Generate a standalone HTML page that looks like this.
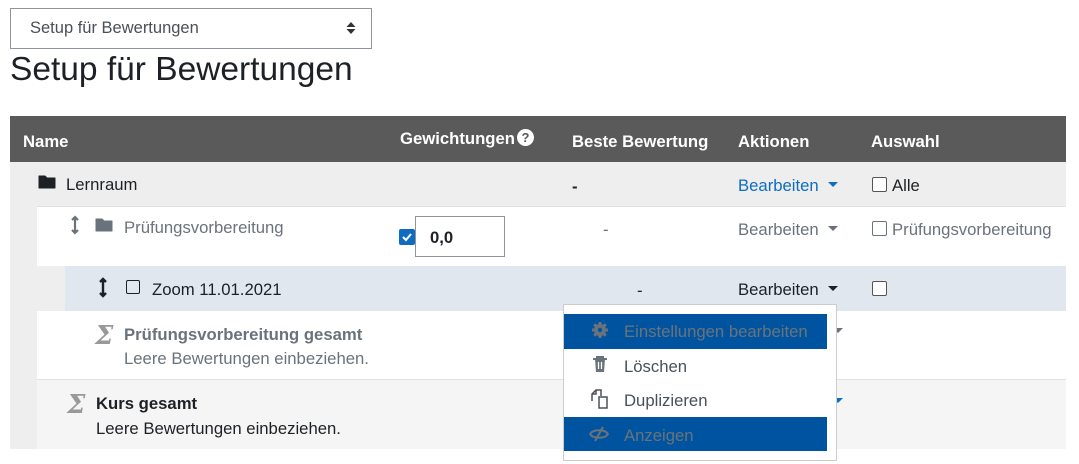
<!DOCTYPE html>
<html><head><meta charset="utf-8"><style>
*{box-sizing:border-box;margin:0;padding:0}
body{width:1079px;height:464px;background:#fff;font-family:"Liberation Sans",sans-serif;font-size:16.7px;color:#1d2125;position:relative;overflow:hidden}
.a{position:absolute;white-space:nowrap}
.blue{color:#0f6cbf}
.grey{color:#6a737b}
.cb{position:absolute;width:15px;height:15px;border:1.5px solid #555;border-radius:2px;background:#fff}
.tri{display:inline-block;width:0;height:0;border-left:5px solid transparent;border-right:5px solid transparent;border-top:5px solid currentColor;vertical-align:middle;margin-left:9px;position:relative;top:-2px}
.sig{position:absolute;font-size:26px;color:#999;font-family:'DejaVu Serif',serif;font-style:italic;font-weight:bold}
</style></head><body>
<div class="a" style="left:10px;top:8px;width:362px;height:41px;border:1px solid #8f959e;"></div>
<div class="a" style="left:30px;top:19px;font-size:16.5px;color:#495057">Setup für Bewertungen</div>
<svg class="a" style="left:346px;top:22px" width="10" height="12" viewBox="0 0 10 12"><path d="M5 0L9.5 5H0.5Z M5 12L9.5 7H0.5Z" fill="#333"/></svg>
<div class="a" style="left:10px;top:51px;font-size:33.5px;color:#1d2125">Setup für Bewertungen</div>

<div class="a" style="left:10px;top:116px;width:1056px;height:46px;background:#5a5a5a"></div>
<div class="a" style="left:23px;top:132px;color:#fff;font-weight:bold">Name</div>
<div class="a" style="left:400px;top:129px;color:#fff;font-weight:bold">Gewichtungen</div>
<div class="a" style="left:517px;top:129px;width:17px;height:17px;border-radius:50%;background:#fff;color:#5a5a5a;font-weight:bold;font-size:13px;text-align:center;line-height:17px">?</div>
<div class="a" style="left:572px;top:132px;color:#fff;font-weight:bold">Beste Bewertung</div>
<div class="a" style="left:738px;top:132px;color:#fff;font-weight:bold">Aktionen</div>
<div class="a" style="left:871px;top:132px;color:#fff;font-weight:bold">Auswahl</div>

<div class="a" style="left:10px;top:162px;width:1056px;height:287px;background:#eee"></div>
<div class="a" style="left:37px;top:206px;width:1029px;height:1px;background:#dee2e6"></div>
<div class="a" style="left:37px;top:207px;width:1029px;height:59px;background:#fff"></div>
<div class="a" style="left:65px;top:266px;width:1001px;height:45px;background:#e0e7ef"></div>
<div class="a" style="left:37px;top:311px;width:1029px;height:68px;background:#fff"></div>
<div class="a" style="left:37px;top:379px;width:1029px;height:1px;background:#dee2e6"></div>
<div class="a" style="left:37px;top:380px;width:1029px;height:69px;background:#f5f5f5"></div>

<svg class="a" style="left:38px;top:175px" width="18" height="14" viewBox="0 0 18 14"><path d="M1 1h6l2 2h8v10H1z" fill="#1d2125" stroke="#1d2125" stroke-linejoin="round"/></svg>
<div class="a" style="left:66px;top:175px">Lernraum</div>
<div class="a" style="left:572px;top:177px;font-weight:bold">-</div>
<div class="a blue" style="left:738px;top:176px">Bearbeiten<span class="tri"></span></div>
<div class="cb" style="left:872px;top:177px"></div>
<div class="a" style="left:892px;top:176px">Alle</div>

<svg class="a" style="left:70px;top:215px" width="10" height="20" viewBox="0 0 10 20"><path d="M5 2v16M2 5l3-3 3 3M2 15l3 3 3-3" stroke="#6a737b" stroke-width="2.2" fill="none"/></svg>
<svg class="a" style="left:95px;top:218px" width="18" height="14" viewBox="0 0 18 14"><path d="M1 1h6l2 2h8v10H1z" fill="#6a737b" stroke="#6a737b" stroke-linejoin="round"/></svg>
<div class="a grey" style="left:124px;top:218px">Prüfungsvorbereitung</div>
<div class="a" style="left:399px;top:229px;width:16px;height:16px;background:#0f6cbf;border-radius:2px"></div>
<svg class="a" style="left:400px;top:230px" width="14" height="14" viewBox="0 0 14 14"><path d="M3 7l3 3 5-6" stroke="#fff" stroke-width="2" fill="none"/></svg>
<div class="a" style="left:415px;top:216px;width:90px;height:41px;border:1px solid #8f959e;background:#fff"></div>
<div class="a" style="left:430px;top:228px;font-weight:bold">0,0</div>
<div class="a grey" style="left:603px;top:220px">-</div>
<div class="a grey" style="left:738px;top:220px">Bearbeiten<span class="tri"></span></div>
<div class="cb" style="left:872px;top:221px;border-color:#6a737b"></div>
<div class="a grey" style="left:892px;top:220px">Prüfungsvorbereitung</div>

<svg class="a" style="left:98px;top:277px" width="10" height="21" viewBox="0 0 10 21"><path d="M5 2v17M2 5l3-3 3 3M2 16l3 3 3-3" stroke="#1d2125" stroke-width="2.4" fill="none"/></svg>
<div class="a" style="left:126px;top:280px;width:14px;height:14px;border:1.5px solid #1d2125;border-radius:2px"></div>
<div class="a" style="left:152px;top:280px">Zoom 11.01.2021</div>
<div class="a" style="left:637px;top:281px">-</div>
<div class="a" style="left:738px;top:280px">Bearbeiten<span class="tri"></span></div>
<div class="cb" style="left:872px;top:281px"></div>

<div class="sig" style="left:95px;top:321px">Σ</div>
<div class="a grey" style="left:124px;top:325px;font-weight:bold">Prüfungsvorbereitung gesamt</div>
<div class="a grey" style="left:124px;top:349px;font-size:16.7px">Leere Bewertungen einbeziehen.</div>
<svg class="a" style="left:833px;top:328px" width="10" height="6"><path d="M0 0h10L5 5z" fill="#6a737b"/></svg>

<div class="sig" style="left:67px;top:390px">Σ</div>
<div class="a" style="left:96px;top:394px;font-weight:bold">Kurs gesamt</div>
<div class="a" style="left:96px;top:419px;font-size:16.7px">Leere Bewertungen einbeziehen.</div>
<svg class="a" style="left:833px;top:398px" width="10" height="6"><path d="M0 0h10L5 5z" fill="#0f6cbf"/></svg>

<div class="a" style="left:563px;top:304px;width:274px;height:157px;border:1px solid #ccc;background:#fff"></div>
<div class="a" style="left:564px;top:314px;width:263px;height:35px;background:#00549f"></div>
<div class="a" style="left:564px;top:417px;width:263px;height:34px;background:#00549f"></div>
<svg class="a" style="left:591px;top:321px" width="18" height="18" viewBox="0 0 18 18"><circle cx="9" cy="9" r="6" fill="#6a737b"/><path d="M9 1v16M1 9h16M3.3 3.3l11.4 11.4M14.7 3.3L3.3 14.7" stroke="#6a737b" stroke-width="3"/><circle cx="9" cy="9" r="2.2" fill="#00549f"/></svg>
<div class="a" style="left:624px;top:322px;color:#6a737b">Einstellungen bearbeiten</div>
<svg class="a" style="left:592px;top:356px" width="16" height="17" viewBox="0 0 16 17"><path d="M1 3h14M5 3V1h6v2" stroke="#6a737b" stroke-width="2" fill="none"/><path d="M3 3l1 13h8l1-13z" fill="#6a737b"/><path d="M6.5 6v7M9.5 6v7" stroke="#fff" stroke-width="1.3"/></svg>
<div class="a" style="left:624px;top:357px;color:#495057">Löschen</div>
<svg class="a" style="left:590px;top:389px" width="20" height="20" viewBox="0 0 20 20"><path d="M2 12V5l4-4h5v6" stroke="#495057" stroke-width="1.5" fill="none"/><path d="M9 8h8v11H9z" stroke="#495057" stroke-width="1.5" fill="#fff"/><path d="M6 1v4H2" stroke="#495057" stroke-width="1.5" fill="none"/></svg>
<div class="a" style="left:624px;top:391px;color:#495057">Duplizieren</div>
<svg class="a" style="left:589px;top:426px" width="20" height="16" viewBox="0 0 20 16"><path d="M1 8c3-5 15-5 18 0-3 5-15 5-18 0z" stroke="#6a737b" stroke-width="2" fill="none"/><path d="M14 1L6 15" stroke="#6a737b" stroke-width="2"/></svg>
<div class="a" style="left:624px;top:426px;color:#6a737b">Anzeigen</div>
</body></html>
